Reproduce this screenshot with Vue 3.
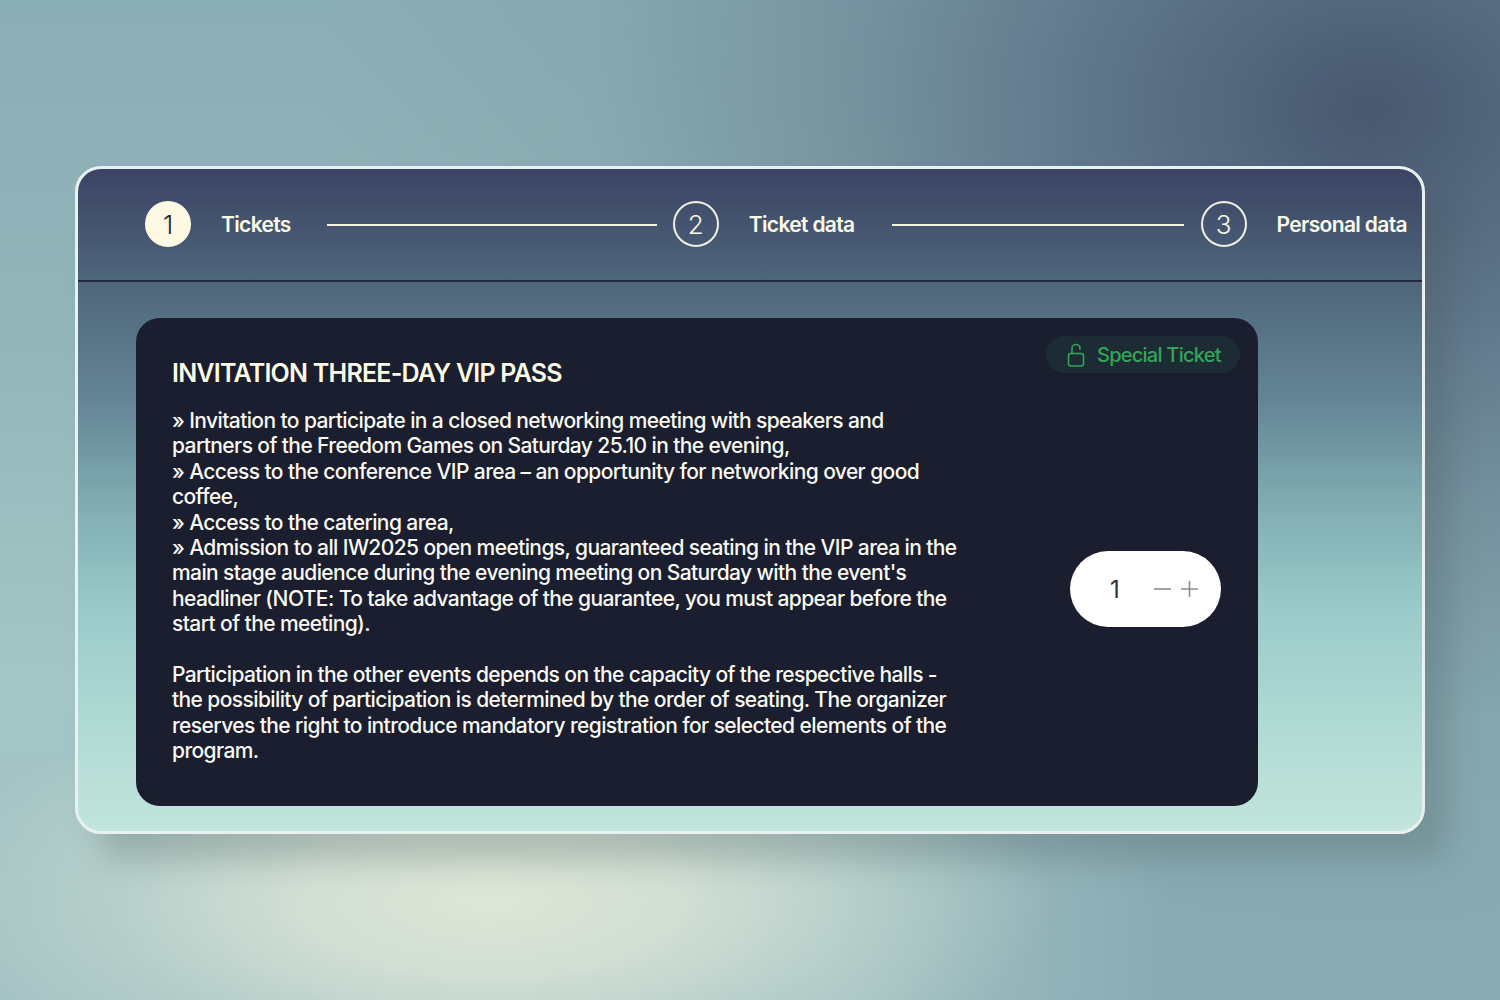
<script setup>
const steps = [
  { n: 1, label: 'Tickets', active: true },
  { n: 2, label: 'Ticket data' },
  { n: 3, label: 'Personal data' }
]
const lines = [
  '» Invitation to participate in a closed networking meeting with speakers and partners of the Freedom Games on Saturday 25.10 in the evening,',
  '» Access to the conference VIP area – an opportunity for networking over good coffee,',
  '» Access to the catering area,',
  "» Admission to all IW2025 open meetings, guaranteed seating in the VIP area in the main stage audience during the evening meeting on Saturday with the event's headliner (NOTE: To take advantage of the guarantee, you must appear before the start of the meeting)."
]
</script>

<template>
  <div class="page">
    <main class="card">
      <header class="steps">
        <template v-for="(s, i) in steps" :key="s.n">
          <div class="step">
            <span class="circle" :class="{ active: s.active }">{{ s.n }}</span>
            <span class="label">{{ s.label }}</span>
          </div>
          <span v-if="i < 2" class="line" :class="'line' + i"></span>
        </template>
      </header>
      <section class="body">
        <article class="panel">
          <div class="info">
            <h1>INVITATION THREE-DAY VIP PASS</h1>
            <p v-for="l in lines" :key="l">{{ l }}</p>
            <p class="gap">Participation in the other events depends on the capacity of the respective halls - the possibility of participation is determined by the order of seating. The organizer reserves the right to introduce mandatory registration for selected elements of the program.</p>
          </div>
          <aside class="side">
            <div class="badge">
              <svg width="20" height="25" viewBox="0 0 20 25" fill="none" stroke="#34a558" stroke-width="1.6" stroke-linecap="round" stroke-linejoin="round">
                <rect x="2.5" y="10.5" width="15" height="12.5" rx="2.5" />
                <path d="M6 10.5V5.5a4 4 0 0 1 8 0v.8" />
              </svg>
              <span>Special Ticket</span>
            </div>
            <div class="stepper">
              <span class="qty">1</span>
              <svg width="45" height="20" viewBox="0 0 45 20" fill="none" stroke="#8d8d8d" stroke-width="1.6">
                <path d="M0 10H17" />
                <path d="M27 10H44M35.5 2V18" />
              </svg>
            </div>
          </aside>
        </article>
      </section>
    </main>
  </div>
</template>

<style scoped>
.page {
  width: 1500px;
  height: 1000px;
  overflow: hidden;
  display: flex;
  align-items: center;
  justify-content: center;
  font-family: Inter, "Liberation Sans", sans-serif;
  background:
    radial-gradient(ellipse 560px 220px at 490px 900px, rgba(222, 230, 214, 1) 0%, rgba(216, 227, 214, 0.85) 35%, rgba(200, 218, 208, 0.45) 70%, rgba(200, 218, 208, 0) 100%),
    radial-gradient(ellipse 1050px 820px at 1370px 110px, rgba(70, 86, 110, 0.98) 0%, rgba(84, 104, 128, 0.82) 25%, rgba(100, 125, 140, 0.55) 50%, rgba(120, 150, 160, 0.22) 75%, rgba(130, 160, 170, 0) 100%),
    linear-gradient(90deg, rgba(136, 171, 179, 0) 55%, #88abb3 78%),
    linear-gradient(180deg, #8aaeb5 0%, #92b6ba 35%, #a4c6c6 68%, #a4c2c4 100%);
}
.card {
  width: 1350px;
  height: 668px;
  box-sizing: border-box;
  border: 3px solid #e9f0f0;
  border-radius: 26px;
  overflow: hidden;
  display: flex;
  flex-direction: column;
  background: linear-gradient(180deg, #3a4363 0%, #4f667b 17%, #648595 35%, #7fabb0 50%, #98c8c8 65%, #abd7d2 80%, #c2e5dc 100%);
  box-shadow: 24px 26px 30px 0 rgba(70, 85, 85, 0.26);
}
.steps {
  height: 113px;
  flex: none;
  box-sizing: border-box;
  border-bottom: 2px solid #1f2a44;
  padding: 0 0 1px 67px;
  display: flex;
  align-items: center;
}
.step {
  display: flex;
  align-items: center;
  gap: 30px;
  color: #fbf9e8;
}
.circle {
  width: 46px;
  height: 46px;
  box-sizing: border-box;
  border: 2px solid #f0f0e4;
  border-radius: 50%;
  display: flex;
  align-items: center;
  justify-content: center;
  font-size: 26px;
  font-weight: 300;
}
.circle.active {
  background: #fdf9e3;
  border-color: #fdf9e3;
  color: #1c1f2e;
}
.label {
  font-size: 21px;
  line-height: 26px;
  padding-top: 2px;
  font-weight: 600;
  letter-spacing: -0.65px;
  white-space: nowrap;
}
.line {
  height: 2px;
  background: #f3f3e0;
  flex: none;
}
.line0 {
  width: 330px;
  margin: 2px 16px 0 36px;
}
.line1 {
  width: 292px;
  margin: 2px 17px 0 37px;
}
.body {
  padding: 36px 0 0 58px;
}
.panel {
  width: 1122px;
  height: 488px;
  box-sizing: border-box;
  padding: 0 18px 0 36px;
  border-radius: 24px;
  background: #1b1e2e;
  display: flex;
  justify-content: space-between;
}
.info {
  width: 795px;
  padding-top: 40px;
  color: #f9f9f2;
  font-size: 21px;
  font-weight: 500;
  line-height: 25.4px;
  letter-spacing: -0.6px;
}
h1 {
  margin: 0 0 19px;
  font-size: 25px;
  line-height: 31px;
  font-weight: 600;
  letter-spacing: -0.77px;
  color: #fcfbe6;
}
p {
  margin: 0;
}
.gap {
  margin-top: 25.4px;
}
.side {
  width: 194px;
  padding-top: 18px;
  display: flex;
  flex-direction: column;
  align-items: flex-end;
}
.badge {
  width: 194px;
  height: 37px;
  box-sizing: border-box;
  padding: 1px 0 0 20px;
  border-radius: 19px;
  background: #1d2c34;
  color: #34a558;
  display: flex;
  align-items: center;
  gap: 11px;
  font-size: 20px;
  font-weight: 500;
  letter-spacing: -0.75px;
  white-space: nowrap;
}
.stepper {
  width: 151px;
  height: 76px;
  margin: 178px 19px 0 0;
  box-sizing: border-box;
  padding-left: 40px;
  border-radius: 38px;
  background: #fff;
  display: flex;
  align-items: center;
  gap: 34px;
  color: #333;
}
.qty {
  font-size: 24px;
  font-weight: 400;
  width: 10px;
}
</style>
